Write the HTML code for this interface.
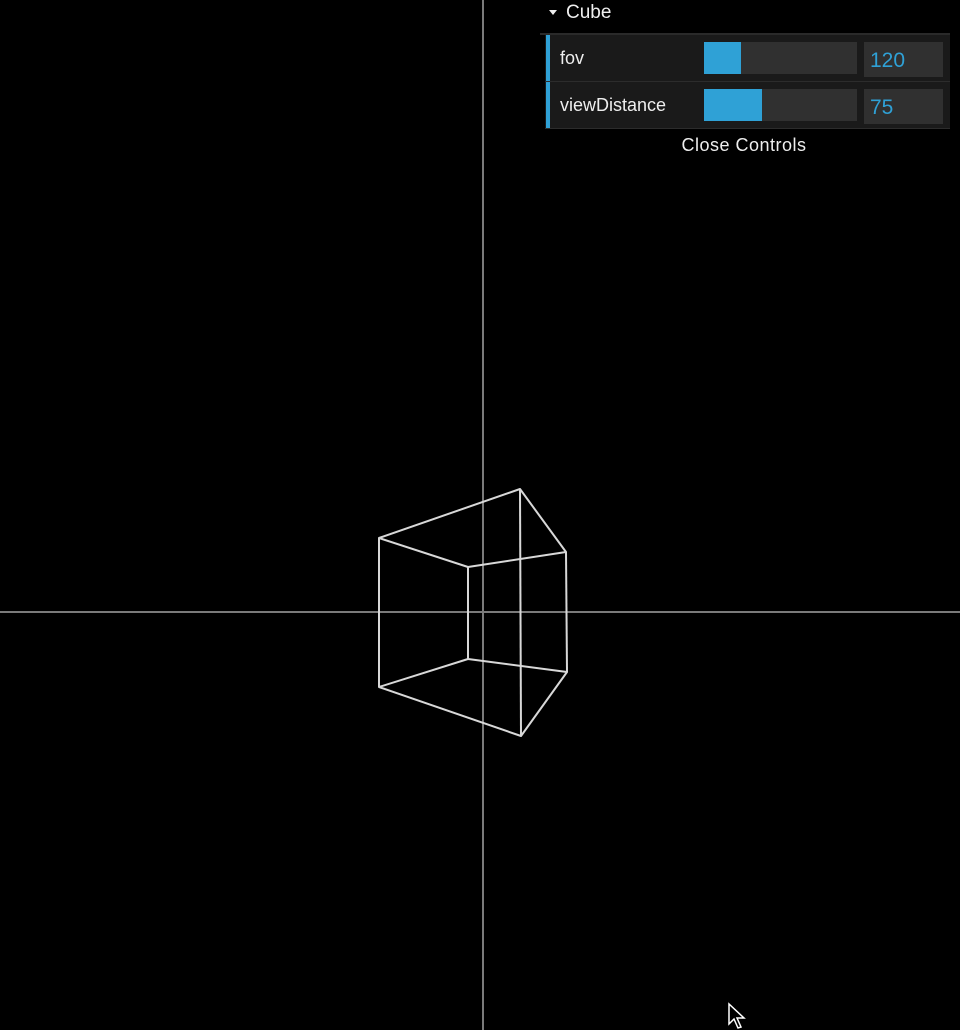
<!DOCTYPE html>
<html><head><style>
html,body{margin:0;padding:0;background:#000;width:960px;height:1030px;overflow:hidden;font-family:"Liberation Sans",sans-serif;}
.abs{position:absolute;}
.row{position:absolute;left:545px;width:405px;height:46px;background:#1a1a1a;border-bottom:1px solid #2c2c2c;}
.row .bar{position:absolute;left:1px;top:0;width:4px;height:100%;background:#2fa1d6;}
.row .lbl{position:absolute;left:15px;top:13px;color:#eee;font-size:18px;}
.row .sl{position:absolute;left:159px;top:7px;width:153px;height:32px;background:#303030;}
.row .fill{position:absolute;left:0;top:0;height:100%;background:#2fa1d6;}
.row .num{position:absolute;left:319px;top:7px;width:79px;height:35px;background:#303030;color:#2fa1d6;font-size:21px;line-height:37px;padding-left:6px;box-sizing:border-box;}
</style></head><body>
<svg class="abs" style="left:0;top:0" width="960" height="1030">
<line x1="483" y1="0" x2="483" y2="1030" stroke="#7a7a7a" stroke-width="2"/>
<line x1="0" y1="612" x2="960" y2="612" stroke="#7a7a7a" stroke-width="2"/>
<g stroke="#d8d8d8" stroke-width="2" fill="none" stroke-linejoin="round">
<polygon points="379,538 520,489 566,552 468,567"/>
<polygon points="379,687 521,736 567,672 468,659"/>
<line x1="379" y1="538" x2="379" y2="687"/>
<line x1="520" y1="489" x2="521" y2="736"/>
<line x1="566" y1="552" x2="567" y2="672"/>
<line x1="468" y1="567" x2="468" y2="659"/>
</g>
<path d="M729,1004 L729,1024 L734,1019 L738,1028 L741,1027 L737,1018 L744,1018 Z" fill="#000" stroke="#fff" stroke-width="1.5"/>
</svg>
<div class="abs" style="left:549px;top:10px;width:0;height:0;border-left:4px solid transparent;border-right:4px solid transparent;border-top:5px solid #eee;"></div>
<div class="abs" style="left:566px;top:2px;color:#eee;font-size:19px;line-height:22px;">Cube</div>
<div class="abs" style="left:540px;top:33px;width:410px;height:2px;background:#2a2a2a;"></div>
<div class="row" style="top:35px;"><div class="bar"></div><div class="lbl">fov</div><div class="sl"><div class="fill" style="width:37px"></div></div><div class="num">120</div></div>
<div class="row" style="top:82px;"><div class="bar"></div><div class="lbl">viewDistance</div><div class="sl"><div class="fill" style="width:58px"></div></div><div class="num">75</div></div>
<div class="abs" style="left:545px;top:135px;width:398px;text-align:center;color:#eee;font-size:18px;letter-spacing:0.5px;">Close Controls</div>
</body></html>
